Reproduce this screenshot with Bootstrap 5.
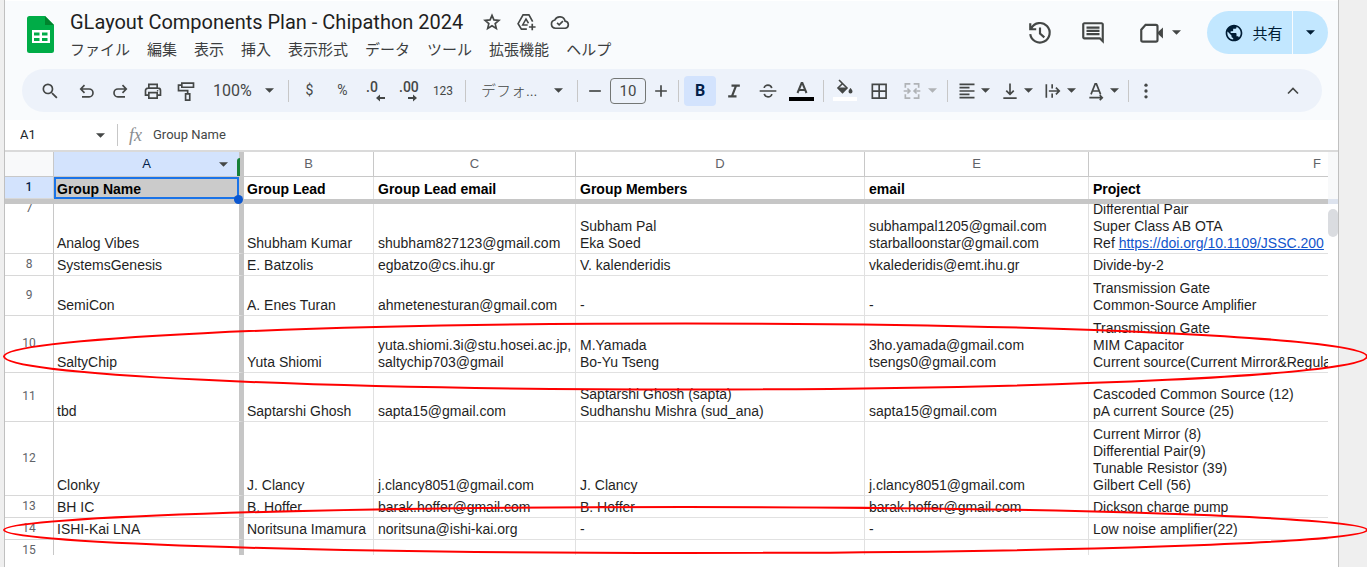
<!DOCTYPE html>
<html lang="ja">
<head>
<meta charset="utf-8">
<meta name="viewport" content="width=device-width, initial-scale=1">
<title>GLayout Components Plan - Chipathon 2024</title>
<link href="https://cdn.jsdelivr.net/npm/bootstrap@5.3.0/dist/css/bootstrap.min.css" rel="stylesheet">
<style>
  body { background: #efefef; font-family: Roboto, "Noto Sans CJK JP", sans-serif; color: #1f1f1f; }
  button { border: 0; background: none; padding: 0; color: inherit; }
  svg { display: block; flex: none; }
  .ico { width: 20px; height: 20px; fill: none; stroke: currentColor; stroke-width: 2; }
  .ico.solid { fill: currentColor; stroke: none; }
  .caret { width: 9px; height: 5px; fill: currentColor; }

  .app-window { height: 100vh; margin: 0 28px 0 4px; padding-bottom: 12px; background: #fff; border: solid #c0c0c0; border-width: 0 1px; }
  .app-top { background: #f9fbfd; border-top: 1px solid #fff; height: 120px; }
  .title-row { height: 68px; padding: 0 10px 0 22px; }
  .doc-logo { margin-top: 15px; }
  .doc-title { font-size: 20px; line-height: 26px; }
  .doc-actions { color: #444746; gap: 14px; margin-left: 3px; }
  .menu-row { gap: 17px; padding-top: 2px; font-family: "Noto Sans CJK JP", sans-serif; font-weight: 300; font-size: 15px; line-height: 24px; color: #3c3e40; }
  .head-actions { margin-top: 10px; }
  .head-btn { width: 53px; color: #444746; }
  .head-btn .ico { width: 26px; height: 26px; }
  .meet-btn { margin: 0 21px 0 14px; }
  .share { height: 43px; border-radius: 22px; background: #c2e7ff; color: #001d35; overflow: hidden; font: 300 15px "Noto Sans CJK JP", sans-serif; }
  .share .main-part { width: 85px; padding-left: 8px; }
  .share .menu-part { width: 36px; border-left: 1px solid #f9fbfd; }

  .tool-bar { height: 43px; margin: 0 16px 0 17px; padding: 0 9px 0 8px; border-radius: 22px; background: #edf2fa; color: #444746; font-size: 14px; }
  .tb { width: 33px; height: 32px; display: flex; align-items: center; justify-content: center; flex: none; }
  .tb.wide { width: 40px; }
  .tb.mid { width: 34px; }
  .tb.slim { width: 26px; }
  .tb.num-fmt { width: 36px; font-size: 12px; }
  .tb.pair { width: 43px; gap: 4px; }
  .tb.merge { width: 47px; gap: 6px; color: #b0b3b6; }
  .tb.on { border: 1px solid transparent; border-radius: 5px; background: #d3e3fd; background-clip: padding-box; color: #041e49; }
  .sep { width: 1px; height: 22px; margin: 0 4px; background: #c7c7c7; flex: none; }
  .pick { appearance: none; border: 0; color: inherit; padding: 0 0 0 11px; height: 32px;
    background: url("data:image/svg+xml,%3Csvg xmlns='http://www.w3.org/2000/svg' viewBox='0 0 10 5'%3E%3Cpath fill='%23444746' d='M0 0h10L5 5z'/%3E%3C/svg%3E") no-repeat right 10px center / 9px 5px; }
  .zoom-pick { width: 82px; font-size: 16px; }
  .font-pick { width: 103px; font-family: "Noto Sans CJK JP", sans-serif; font-weight: 300; font-size: 15px; }
  .size-box { width: 36px; height: 26px; margin: 0 2px; border: 1px solid #747775; border-radius: 4px; background: none; color: inherit; text-align: center; padding: 0; font-size: 15px; }

  .formula-row { height: 32px; border-bottom: 2px solid #dadada; font-size: 13px; flex: none; }
  .formula-row input { border: 0; padding: 0; background: none; color: #444746; }
  .formula-row .sep { margin: 0 11px 0 12px; }
  .name-box { width: 76px; margin-left: 15px; }
  .fx-mark { width: 24px; font: italic 18px "Liberation Serif", serif; color: #8a8d90; }

  .grid-pane { min-width: 0; overflow: hidden; }
  .sheet { table-layout: fixed; width: 1541px; border-collapse: separate; border-spacing: 0; font-family: "Liberation Sans", Arial, sans-serif; font-size: 14px; line-height: 17px; }
  .sheet col.num { width: 49px; } .sheet col.ca { width: 190px; } .sheet col.cb { width: 130px; }
  .sheet col.cc { width: 202px; } .sheet col.cd { width: 289px; } .sheet col.ce { width: 224px; } .sheet col.cf { width: 457px; }
  .sheet th, .sheet td { padding: 0 0 1px 3px; border: solid #e1e1e1; border-width: 0 1px 1px 0; vertical-align: bottom; white-space: nowrap; height: 22px; }
  .sheet td:nth-child(n+4) { padding-left: 4px; }
  .sheet th[scope] { padding: 0 0 1px; text-align: center; vertical-align: middle; font-weight: 400; color: #5f6368; border-color: #c8c8c8; }
  .sheet th[scope=col] { height: 25px; font-size: 13px; }
  .sheet th[scope=row] { font-family: Roboto, sans-serif; font-size: 12px; border-bottom-color: #d8d8d8; }
  .sheet tr > :nth-child(2) { border-right: 5px solid #c6c6c6; }
  .sheet th[scope].sel { background: #d3e3fd; color: #041e49; font-weight: 500; }
  .frozen { border-bottom: 5px solid #c6c6c6; width: max-content; }
  .frozen td { border-bottom: 0; font-weight: 700; color: #000; }
  .frozen td.active { position: relative; background: #cbcbcb; box-shadow: inset 0 0 0 2px #1a73e8; }
  .handle { position: absolute; right: -4px; bottom: -5px; width: 9px; height: 9px; border-radius: 50%; background: #0b57d0; }
  .col-menu { position: absolute; right: 11px; top: 10px; color: #444746; }
  .drag-bar { position: absolute; right: -1px; top: 6px; bottom: 0; width: 3px; background: #188038; border-radius: 3px 0 0 0; }
  .scrolled { margin-top: -40px; }
  .scroll-body { min-height: 0; overflow: hidden; flex: 1 1 0; }
  .r-7 td { height: 90px; } .r-9 td { height: 40px; } .r-10 td { height: 57px; } .r-11 td { height: 49px; } .r-12 td { height: 74px; }
  .sheet a { color: #1155cc; }
  .track { width: 10px; }
  .track-head { height: 52px; background: #f8f9fa; border-bottom: 5px solid #dde3ee; }
  .thumb { height: 28px; margin-top: 5px; border-radius: 5px; background: #dadce0; }

  .ring { position: absolute; left: 4px; width: calc(100% - 4px); overflow: visible; pointer-events: none; }
  .ring ellipse { fill: none; stroke: #f00; stroke-width: 2; }
  .ring-a { top: 322px; height: 69px; }
  .ring-b { top: 506px; height: 48px; }
</style>
</head>
<body class="position-relative overflow-hidden">
<div class="app-window d-flex flex-column">

  <header class="app-top flex-shrink-0">
    <div class="title-row d-flex align-items-start">
      <svg class="doc-logo" width="27" height="37" viewBox="0 0 27 37">
        <path fill="#00ac47" d="M2.500 0H18l9 9v25.500a2.500 2.500 0 0 1-2.500 2.500h-22A2.500 2.500 0 0 1 0 34.500v-32A2.500 2.500 0 0 1 2.500 0z"/>
        <path fill="#00832d" d="M18 0l9 9h-9z"/>
        <path fill="#fff" fill-rule="evenodd" d="M5 14h18v13H5zM7 16.500v3h5.500v-3zm8 0v3h5.500v-3zM7 22v3h5.500v-3zm8 0v3h5.500v-3z"/>
      </svg>
      <div class="ms-3 pt-2">
        <div class="d-flex align-items-center gap-3">
          <h1 class="doc-title fw-normal mb-0 text-nowrap">GLayout Components Plan - Chipathon 2024</h1>
          <div class="doc-actions d-flex align-items-center">
          <button aria-label="スターを付ける"><svg class="ico" viewBox="0 0 24 24"><path d="M12 4l2.300 5.500 6 .5-4.500 3.900 1.400 5.800-5.200-3.100-5.200 3.100 1.400-5.800L3.700 10l6-.5z"/></svg></button>
          <button aria-label="移動"><svg class="ico" viewBox="0 0 24 24"><path d="M13 20.500H6.500L2.500 14 8.500 3.500h7l4.500 8M19.500 14v8M15.500 18h8"/><path d="M14 15.500H8l4-7 3 5" stroke-width="1.800"/></svg></button>
          <button aria-label="保存状況"><svg class="ico" viewBox="0 0 24 24"><path d="M6.500 19.500a5 5 0 0 1-.7-9.900 6.500 6.500 0 0 1 12.300 1.400A4.300 4.300 0 0 1 18.500 19.500z"/><path d="M8.500 13l2.500 2.500 4.500-4.500"/></svg></button>
          </div>
        </div>
        <nav class="menu-row d-flex">
          <button>ファイル</button><button>編集</button><button>表示</button><button>挿入</button><button>表示形式</button><button>データ</button><button>ツール</button><button>拡張機能</button><button>ヘルプ</button>
        </nav>
      </div>
      <div class="head-actions d-flex align-items-center ms-auto">
        <button class="head-btn d-flex justify-content-center" aria-label="履歴"><svg class="ico" viewBox="0 0 24 24"><path d="M4 7.500A9 9 0 1 1 3 13M3 3v5.500h5.500M12 7v5.500l4 3.500"/></svg></button>
        <button class="head-btn d-flex justify-content-center" aria-label="コメント"><svg class="ico solid" viewBox="0 0 24 24"><path d="M22 4c0-1.100-.9-2-2-2H4c-1.100 0-2 .9-2 2v12c0 1.100.9 2 2 2h14l4 4zM20 4v13.200L18.800 16H4V4zM6 12h12v2H6zm0-3h12v2H6zm0-3h12v2H6z"/></svg></button>
        <button class="head-btn meet-btn d-flex align-items-center justify-content-center gap-2" aria-label="ビデオ会議"><svg class="ico" viewBox="0 0 24 24"><path d="M7 4.500h9.500A1.500 1.500 0 0 1 18 6v12.500a1.500 1.500 0 0 1-1.500 1.500h-12A1.500 1.500 0 0 1 3 18.500V9z"/><path fill="currentColor" stroke="none" d="M18 11.500l5-4.500v10l-5-4.500z"/></svg><svg class="caret" viewBox="0 0 10 5"><path d="M0 0h10L5 5z"/></svg></button>
        <div class="share d-flex">
          <button class="main-part d-flex align-items-center justify-content-center gap-2"><svg class="ico solid" viewBox="0 0 24 24"><path d="M12 2C6.480 2 2 6.480 2 12s4.480 10 10 10 10-4.480 10-10S17.520 2 12 2zm-1 17.930c-3.950-.49-7-3.850-7-7.930 0-.62.08-1.210.21-1.790L9 15v1c0 1.100.9 2 2 2zm6.900-2.540c-.26-.81-1-1.390-1.900-1.390h-1v-3c0-.55-.45-1-1-1H8v-2h2c.55 0 1-.45 1-1V7h2c1.100 0 2-.9 2-2v-.41c2.930 1.190 5 4.060 5 7.410 0 2.080-.8 3.970-2.100 5.390z"/></svg>共有</button>
          <button class="menu-part d-flex align-items-center justify-content-center" aria-label="共有メニュー"><svg class="caret" viewBox="0 0 10 5"><path d="M0 0h10L5 5z"/></svg></button>
        </div>
      </div>
    </div>

    <div class="tool-bar d-flex align-items-center" role="toolbar">
      <button class="tb wide" aria-label="検索"><svg class="ico solid" viewBox="0 0 24 24"><path d="M15.500 14h-.79l-.28-.27A6.470 6.470 0 0 0 16 9.500 6.500 6.500 0 1 0 9.500 16c1.610 0 3.090-.59 4.230-1.570l.27.28v.79l5.500 5.500 1.500-1.500zm-6 0C7.010 14 5 11.990 5 9.500S7.010 5 9.500 5 14 7.010 14 9.500 11.990 14 9.500 14z"/></svg></button>
      <button class="tb" aria-label="元に戻す"><svg class="ico" viewBox="0 0 24 24"><path d="M6 19h8.500a4.700 4.700 0 0 0 0-9.400H5M9 5L4.500 9.600 9 14.200"/></svg></button>
      <button class="tb" aria-label="やり直し"><svg class="ico" viewBox="0 0 24 24"><path d="M18 19H9.500a4.700 4.700 0 0 1 0-9.400H19M15 5l4.500 4.600-4.500 4.600"/></svg></button>
      <button class="tb" aria-label="印刷"><svg class="ico" viewBox="0 0 24 24"><path d="M7 8.500V4h10v4.500M7 17H3v-5.500a3 3 0 0 1 3-3h12a3 3 0 0 1 3 3V17h-4M7 14h10v6.500H7z"/><circle cx="17.500" cy="11.700" r="1" fill="currentColor" stroke="none"/></svg></button>
      <button class="tb" aria-label="書式を貼り付け"><svg class="ico" viewBox="0 0 24 24"><path d="M7 2.500h14v5H7zM7 5H3v6.500h11V15M11.500 15.500h5V23h-5z"/></svg></button>
      <select class="pick zoom-pick" aria-label="ズーム"><option>100%</option></select>
      <span class="sep"></span>
      <button class="tb" aria-label="通貨">$</button>
      <button class="tb" aria-label="パーセント">%</button>
      <button class="tb" aria-label="小数点以下を減らす"><svg width="22" height="22" viewBox="0 0 22 22" fill="currentColor"><text x="1" y="12" font-size="14" font-weight="500">.0</text><path d="M20 17h-5v-2.500L11 18l4 3.500V19h5z"/></svg></button>
      <button class="tb" aria-label="小数点以下を増やす"><svg width="22" height="22" viewBox="0 0 22 22" fill="currentColor"><text x="1" y="12" font-size="14" font-weight="500">.00</text><path d="M10 17h5v-2.500l4 3.500-4 3.500V19h-5z"/></svg></button>
      <button class="tb num-fmt" aria-label="表示形式の詳細">123</button>
      <span class="sep"></span>
      <select class="pick font-pick" aria-label="フォント"><option>デフォ...</option></select>
      <span class="sep"></span>
      <button class="tb slim" aria-label="縮小"><svg class="ico" viewBox="0 0 24 24"><path d="M5 12h14"/></svg></button>
      <input class="size-box" value="10" aria-label="フォントサイズ">
      <button class="tb slim" aria-label="拡大"><svg class="ico" viewBox="0 0 24 24"><path d="M5 12h14M12 5v14"/></svg></button>
      <span class="sep"></span>
      <button class="tb mid on fs-6 fw-bold" aria-label="太字">B</button>
      <button class="tb mid" aria-label="斜体"><svg class="ico" viewBox="0 0 24 24"><path d="M9 5.500h10M5 18.500h10M14.500 5.500l-5 13" stroke-width="2.600"/></svg></button>
      <button class="tb mid" aria-label="取り消し線"><svg class="ico" viewBox="0 0 24 24"><path d="M2 12h20M16.500 8.500C16 6.500 14.300 5 12 5S7.500 6.500 7.500 8.500M7.500 15.500C8 17.500 9.700 19 12 19s4.500-1.500 4.500-3.500"/></svg></button>
      <button class="tb mid" aria-label="テキストの色"><svg width="26" height="24" viewBox="0 0 26 24"><path fill="none" stroke="currentColor" stroke-width="2" d="M8.500 14L12.600 4h.8L17.500 14M10 11h6"/><path fill="#000" d="M0 18h25v4H0z"/></svg></button>
      <span class="sep"></span>
      <button class="tb mid" aria-label="塗りつぶしの色"><svg width="26" height="24" viewBox="0 0 26 24"><path fill="none" stroke="currentColor" stroke-width="1.600" d="M7 1l8 8-4.500 4.500L6 9l4.500-4.500"/><path fill="currentColor" d="M5.500 8.500h9.500l-4.500 5.500zM18.500 9s2 2.200 2 3.400a2 2 0 0 1-4 0c0-1.200 2-3.400 2-3.400z"/><path fill="#fff" d="M1 18h24v4H1z"/></svg></button>
      <button class="tb mid" aria-label="枠線"><svg class="ico" viewBox="0 0 24 24"><path d="M4 4h16.500v16.500H4zM12.200 4v16.500M4 12.200h16.500"/></svg></button>
      <button class="tb merge" aria-label="セルを結合" disabled><svg class="ico" viewBox="0 0 24 24"><path d="M10 3.500H4V8M14 3.500h6V8M10 20.500H4V16M14 20.500h6V16M2 12h7M15 12h7M6.500 9l3 3-3 3M17.500 9l-3 3 3 3"/></svg><svg class="caret" viewBox="0 0 10 5"><path d="M0 0h10L5 5z"/></svg></button>
      <span class="sep"></span>
      <button class="tb pair" aria-label="水平方向の配置"><svg class="ico" viewBox="0 0 24 24"><path d="M3 4h18M3 8h12M3 12h18M3 16h12M3 20h18"/></svg><svg class="caret" viewBox="0 0 10 5"><path d="M0 0h10L5 5z"/></svg></button>
      <button class="tb pair" aria-label="垂直方向の配置"><svg class="ico" viewBox="0 0 24 24"><path d="M4 20.500h16M12 3v13M7.500 11.500L12 16l4.500-4.500"/></svg><svg class="caret" viewBox="0 0 10 5"><path d="M0 0h10L5 5z"/></svg></button>
      <button class="tb pair" aria-label="折り返し"><svg class="ico" viewBox="0 0 24 24"><path d="M4 4v16M11 4v5M11 15v5M7 12h12M15.500 8l4 4-4 4"/></svg><svg class="caret" viewBox="0 0 10 5"><path d="M0 0h10L5 5z"/></svg></button>
      <button class="tb pair" aria-label="回転"><svg class="ico" viewBox="0 0 24 24"><path d="M6 16l5-12.500h1.500l5 12.500M7.500 12h8M4 20h15M16.500 17l3 3-3 3"/></svg><svg class="caret" viewBox="0 0 10 5"><path d="M0 0h10L5 5z"/></svg></button>
      <span class="sep"></span>
      <button class="tb slim" aria-label="その他"><svg class="ico solid" viewBox="0 0 24 24"><circle cx="12" cy="5" r="2"/><circle cx="12" cy="12" r="2"/><circle cx="12" cy="19" r="2"/></svg></button>
      <button class="tb wide ms-auto" aria-label="メニューを隠す"><svg class="ico" viewBox="0 0 24 24"><path d="M6 15l6-6 6 6"/></svg></button>
    </div>
  </header>

  <div class="formula-row d-flex align-items-center">
    <input class="name-box text-body" value="A1" aria-label="名前ボックス">
    <svg class="caret" viewBox="0 0 10 5" color="#444746"><path d="M0 0h10L5 5z"/></svg>
    <span class="sep"></span>
    <span class="fx-mark">fx</span>
    <input class="flex-fill" value="Group Name" aria-label="数式バー">
  </div>

  <main class="d-flex flex-fill" style="min-height:0">
    <div class="grid-pane flex-fill d-flex flex-column">
      <div class="frozen">
      <table class="sheet">
        <colgroup><col class="num"><col class="ca"><col class="cb"><col class="cc"><col class="cd"><col class="ce"><col class="cf"></colgroup>
        <tr><th scope="col" class="bg-light"></th><th scope="col" class="sel position-relative">A<svg class="caret col-menu" viewBox="0 0 10 5"><path d="M0 0h10L5 5z"/></svg><span class="drag-bar"></span></th><th scope="col">B</th><th scope="col">C</th><th scope="col">D</th><th scope="col">E</th><th scope="col">F</th></tr>
        <tr><th scope="row" class="sel">1</th><td class="active">Group Name<span class="handle"></span></td><td>Group Lead</td><td>Group Lead email</td><td>Group Members</td><td>email</td><td>Project</td></tr>
      </table>
      </div>
      <div class="scroll-body">
      <table class="sheet scrolled">
        <colgroup><col class="num"><col class="ca"><col class="cb"><col class="cc"><col class="cd"><col class="ce"><col class="cf"></colgroup>
        <tr class="r-7"><th scope="row">7</th><td>Analog Vibes</td><td>Shubham Kumar</td><td>shubham827123@gmail.com</td><td>Subham Pal<br>Eka Soed</td><td>subhampal1205@gmail.com<br>starballoonstar@gmail.com</td><td>Differential Pair<br>Super Class AB OTA<br>Ref <a href="https://doi.org/10.1109/JSSC.200">https://doi.org/10.1109/JSSC.200</a></td></tr>
        <tr><th scope="row">8</th><td>SystemsGenesis</td><td>E. Batzolis</td><td>egbatzo@cs.ihu.gr</td><td>V. kalenderidis</td><td>vkalederidis@emt.ihu.gr</td><td>Divide-by-2</td></tr>
        <tr class="r-9"><th scope="row">9</th><td>SemiCon</td><td>A. Enes Turan</td><td>ahmetenesturan@gmail.com</td><td>-</td><td>-</td><td>Transmission Gate<br>Common-Source Amplifier</td></tr>
        <tr class="r-10"><th scope="row">10</th><td>SaltyChip</td><td>Yuta Shiomi</td><td>yuta.shiomi.3i@stu.hosei.ac.jp,<br>saltychip703@gmail</td><td>M.Yamada<br>Bo-Yu Tseng</td><td>3ho.yamada@gmail.com<br>tsengs0@gmail.com</td><td>Transmission Gate<br>MIM Capacitor<br>Current source(Current Mirror&amp;Regula</td></tr>
        <tr class="r-11"><th scope="row">11</th><td>tbd</td><td>Saptarshi Ghosh</td><td>sapta15@gmail.com</td><td>Saptarshi Ghosh (sapta)<br>Sudhanshu Mishra (sud_ana)</td><td>sapta15@gmail.com</td><td>Cascoded Common Source (12)<br>pA current Source (25)</td></tr>
        <tr class="r-12"><th scope="row">12</th><td>Clonky</td><td>J. Clancy</td><td>j.clancy8051@gmail.com</td><td>J. Clancy</td><td>j.clancy8051@gmail.com</td><td>Current Mirror (8)<br>Differential Pair(9)<br>Tunable Resistor (39)<br>Gilbert Cell (56)</td></tr>
        <tr><th scope="row">13</th><td>BH IC</td><td>B. Hoffer</td><td>barak.hoffer@gmail.com</td><td>B. Hoffer</td><td>barak.hoffer@gmail.com</td><td>Dickson charge pump</td></tr>
        <tr><th scope="row">14</th><td>ISHI-Kai LNA</td><td>Noritsuna Imamura</td><td>noritsuna@ishi-kai.org</td><td>-</td><td>-</td><td>Low noise amplifier(22)</td></tr>
        <tr><th scope="row">15</th><td></td><td></td><td></td><td></td><td></td><td></td></tr>
      </table>
      </div>
    </div>
    <div class="track flex-shrink-0"><div class="track-head"></div><div class="thumb"></div></div>
  </main>
</div>
<svg class="ring ring-a"><ellipse cx="50%" cy="50%" rx="50%" ry="33"/></svg>
<svg class="ring ring-b"><ellipse cx="50%" cy="50%" rx="50%" ry="23"/></svg>
<script src="https://cdn.jsdelivr.net/npm/bootstrap@5.3.0/dist/js/bootstrap.bundle.min.js"></script>
</body>
</html>
